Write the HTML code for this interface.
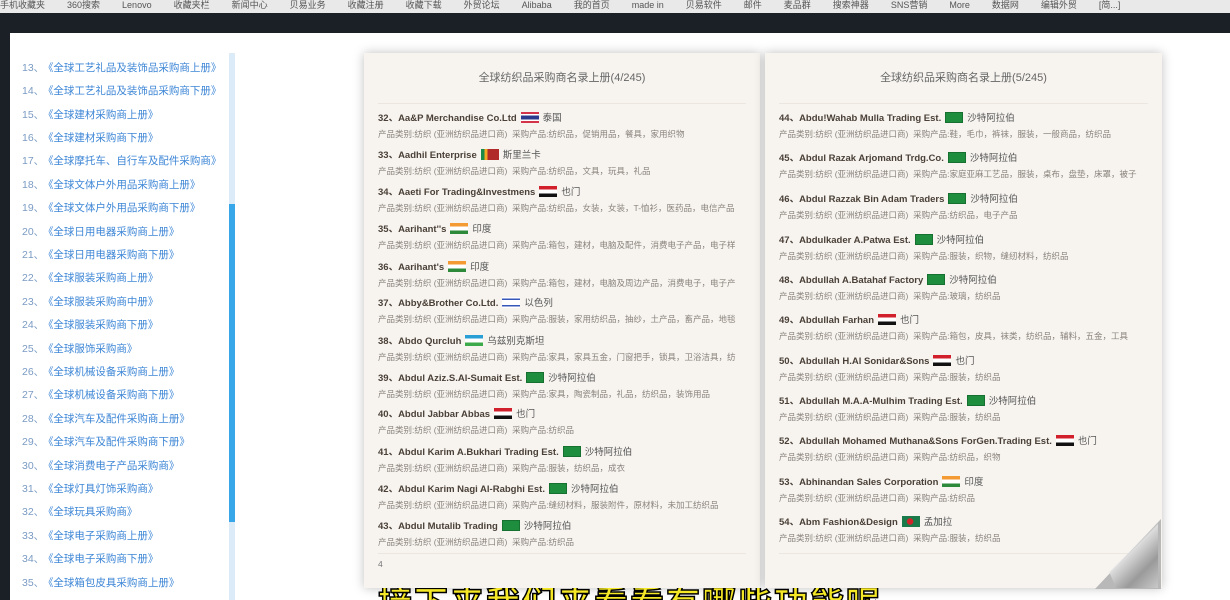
<!DOCTYPE html>
<html style="width:1230px;height:600px;overflow:hidden"><head><meta charset="utf-8"><style>
*{margin:0;padding:0;box-sizing:border-box}
body{width:1230px;height:600px;overflow:hidden;background:#fff;position:relative;font-family:"Liberation Sans","Noto Sans CJK SC",sans-serif}
.abs{position:absolute;white-space:nowrap}
#bm{left:0;top:0;width:1230px;height:13px;background:#e9e9e9;font-size:9px;color:#555;line-height:11px;overflow:hidden}
#bm span{margin-right:22px}
#dark{left:0;top:13px;width:1230px;height:22px;background:#1b1f26}
#ls{left:0;top:13px;width:10px;height:587px;background:#1b1f26}
#panel{left:10px;top:33px;width:1220px;height:567px;background:#fff}
.si{position:absolute;left:22px;font-size:10.5px;color:#3d86d6;white-space:nowrap}
.si b{font-weight:normal;color:#7a9bc4;margin-right:4px}
#track{left:229px;top:53px;width:6px;height:547px;background:#dcebf8}
#thumb{left:229px;top:204px;width:6px;height:318px;background:#38a7ea}
.page{position:absolute;top:53px;height:535px;background:#f7f4f0;overflow:hidden;box-shadow:0 0 10px rgba(0,0,0,.25)}
.ttl{position:absolute;top:16px;width:100%;text-align:center;font-size:11px;color:#666}
.sep{position:absolute;left:14px;right:14px;height:1px;background:#ebe6e0}
.n{position:absolute;left:14px;font-size:9.5px;font-weight:bold;color:#4a4037;white-space:nowrap;line-height:12px}
.n i{font-style:normal;font-weight:normal;color:#555;margin-left:4px}
.d{position:absolute;left:14px;font-size:8.5px;color:#8a837c;white-space:nowrap;line-height:11px}
.f{display:inline-block;width:18px;height:11px;vertical-align:-2px;margin-left:4px}
.th{background:linear-gradient(#d3344a 0 17%,#fff 17% 33%,#2b3a8c 33% 67%,#fff 67% 83%,#d3344a 83%)}
.lk{background:linear-gradient(90deg,#1a8a4a 0 20%,#f5a623 20% 35%,#b02a2a 35%)}
.ye{background:linear-gradient(#d1202c 0 33%,#fff 33% 66%,#111 66%)}
.in{background:linear-gradient(#f39a33 0 33%,#fff 33% 66%,#2c8a3a 66%)}
.il{background:linear-gradient(#fff 0 15%,#3657b8 15% 28%,#fff 28% 72%,#3657b8 72% 85%,#fff 85%)}
.uz{background:linear-gradient(#2a9fd6 0 33%,#fff 33% 66%,#3caa4a 66%)}
.sa{background:#1e8e3e;border:1px solid #167030}
.bd{background:radial-gradient(circle at 45% 50%,#d0242a 0 3px,#1a7a4a 3.5px)}
#curl{left:1095px;top:519px;width:0;height:0;border-left:66px solid transparent;border-bottom:70px solid #b8b8b8}
#sub{left:378px;top:584px;font-size:34px;font-weight:bold;color:#f5e826;-webkit-text-stroke:1.5px #000;letter-spacing:2px;line-height:40px}
</style></head><body>
<div id="bm" class="abs"><span>手机收藏夹</span><span>360搜索</span><span>Lenovo</span><span>收藏夹栏</span><span>新闻中心</span><span>贝易业务</span><span>收藏注册</span><span>收藏下载</span><span>外贸论坛</span><span>Alibaba</span><span>我的首页</span><span>made in</span><span>贝易软件</span><span>邮件</span><span>麦品群</span><span>搜索神器</span><span>SNS营销</span><span>More</span><span>数据网</span><span>编辑外贸</span><span>[简...]</span></div>
<div id="dark" class="abs"></div>
<div id="ls" class="abs"></div>
<div id="panel" class="abs"></div>
<div id="track" class="abs"></div>
<div id="thumb" class="abs"></div>

<div class="si" style="top:60px"><b>13、</b>《全球工艺礼品及装饰品采购商上册》</div>
<div class="si" style="top:83px"><b>14、</b>《全球工艺礼品及装饰品采购商下册》</div>
<div class="si" style="top:107px"><b>15、</b>《全球建材采购商上册》</div>
<div class="si" style="top:130px"><b>16、</b>《全球建材采购商下册》</div>
<div class="si" style="top:153px"><b>17、</b>《全球摩托车、自行车及配件采购商》</div>
<div class="si" style="top:177px"><b>18、</b>《全球文体户外用品采购商上册》</div>
<div class="si" style="top:200px"><b>19、</b>《全球文体户外用品采购商下册》</div>
<div class="si" style="top:224px"><b>20、</b>《全球日用电器采购商上册》</div>
<div class="si" style="top:247px"><b>21、</b>《全球日用电器采购商下册》</div>
<div class="si" style="top:270px"><b>22、</b>《全球服装采购商上册》</div>
<div class="si" style="top:294px"><b>23、</b>《全球服装采购商中册》</div>
<div class="si" style="top:317px"><b>24、</b>《全球服装采购商下册》</div>
<div class="si" style="top:341px"><b>25、</b>《全球服饰采购商》</div>
<div class="si" style="top:364px"><b>26、</b>《全球机械设备采购商上册》</div>
<div class="si" style="top:387px"><b>27、</b>《全球机械设备采购商下册》</div>
<div class="si" style="top:411px"><b>28、</b>《全球汽车及配件采购商上册》</div>
<div class="si" style="top:434px"><b>29、</b>《全球汽车及配件采购商下册》</div>
<div class="si" style="top:458px"><b>30、</b>《全球消费电子产品采购商》</div>
<div class="si" style="top:481px"><b>31、</b>《全球灯具灯饰采购商》</div>
<div class="si" style="top:504px"><b>32、</b>《全球玩具采购商》</div>
<div class="si" style="top:528px"><b>33、</b>《全球电子采购商上册》</div>
<div class="si" style="top:551px"><b>34、</b>《全球电子采购商下册》</div>
<div class="si" style="top:575px"><b>35、</b>《全球箱包皮具采购商上册》</div>

<div class="page" style="left:364px;width:396px">
<div class="ttl">全球纺织品采购商名录上册(4/245)</div>
<div class="sep" style="top:50px"></div>
<div class="n" style="top:59px">32、Aa&amp;P Merchandise Co.Ltd<span class="f th"></span><i>泰国</i></div>
<div class="d" style="top:76px">产品类别:纺织 (亚洲纺织品进口商)&nbsp; 采购产品:纺织品，促销用品，餐具，家用织物</div>
<div class="n" style="top:96px">33、Aadhil Enterprise<span class="f lk"></span><i>斯里兰卡</i></div>
<div class="d" style="top:113px">产品类别:纺织 (亚洲纺织品进口商)&nbsp; 采购产品:纺织品，文具，玩具，礼品</div>
<div class="n" style="top:133px">34、Aaeti For Trading&amp;Investmens<span class="f ye"></span><i>也门</i></div>
<div class="d" style="top:150px">产品类别:纺织 (亚洲纺织品进口商)&nbsp; 采购产品:纺织品，女装，女装，T-恤衫，医药品，电信产品</div>
<div class="n" style="top:170px">35、Aarihant''s<span class="f in"></span><i>印度</i></div>
<div class="d" style="top:187px">产品类别:纺织 (亚洲纺织品进口商)&nbsp; 采购产品:箱包，建材，电脑及配件，消费电子产品，电子样</div>
<div class="n" style="top:208px">36、Aarihant's<span class="f in"></span><i>印度</i></div>
<div class="d" style="top:225px">产品类别:纺织 (亚洲纺织品进口商)&nbsp; 采购产品:箱包，建材，电脑及周边产品，消费电子，电子产</div>
<div class="n" style="top:244px">37、Abby&amp;Brother Co.Ltd.<span class="f il"></span><i>以色列</i></div>
<div class="d" style="top:261px">产品类别:纺织 (亚洲纺织品进口商)&nbsp; 采购产品:服装，家用纺织品，抽纱，土产品，畜产品，地毯</div>
<div class="n" style="top:282px">38、Abdo Qurcluh<span class="f uz"></span><i>乌兹别克斯坦</i></div>
<div class="d" style="top:299px">产品类别:纺织 (亚洲纺织品进口商)&nbsp; 采购产品:家具，家具五金，门窗把手，锁具，卫浴洁具，纺</div>
<div class="n" style="top:319px">39、Abdul Aziz.S.Al-Sumait Est.<span class="f sa"></span><i>沙特阿拉伯</i></div>
<div class="d" style="top:336px">产品类别:纺织 (亚洲纺织品进口商)&nbsp; 采购产品:家具，陶瓷制品，礼品，纺织品，装饰用品</div>
<div class="n" style="top:355px">40、Abdul Jabbar Abbas<span class="f ye"></span><i>也门</i></div>
<div class="d" style="top:372px">产品类别:纺织 (亚洲纺织品进口商)&nbsp; 采购产品:纺织品</div>
<div class="n" style="top:393px">41、Abdul Karim A.Bukhari Trading Est.<span class="f sa"></span><i>沙特阿拉伯</i></div>
<div class="d" style="top:410px">产品类别:纺织 (亚洲纺织品进口商)&nbsp; 采购产品:服装，纺织品，成衣</div>
<div class="n" style="top:430px">42、Abdul Karim Nagi Al-Rabghi Est.<span class="f sa"></span><i>沙特阿拉伯</i></div>
<div class="d" style="top:447px">产品类别:纺织 (亚洲纺织品进口商)&nbsp; 采购产品:缝纫材料，服装附件，原材料，未加工纺织品</div>
<div class="n" style="top:467px">43、Abdul Mutalib Trading<span class="f sa"></span><i>沙特阿拉伯</i></div>
<div class="d" style="top:484px">产品类别:纺织 (亚洲纺织品进口商)&nbsp; 采购产品:纺织品</div>
<div class="sep" style="top:500px"></div>
<div class="d" style="top:506px;color:#777">4</div>
</div>

<div class="page" style="left:765px;width:397px">
<div class="ttl">全球纺织品采购商名录上册(5/245)</div>
<div class="sep" style="top:50px"></div>
<div class="n" style="top:59px">44、Abdu!Wahab Mulla Trading Est.<span class="f sa"></span><i>沙特阿拉伯</i></div>
<div class="d" style="top:76px">产品类别:纺织 (亚洲纺织品进口商)&nbsp; 采购产品:鞋，毛巾，裤袜，服装，一般商品，纺织品</div>
<div class="n" style="top:99px">45、Abdul Razak Arjomand Trdg.Co.<span class="f sa"></span><i>沙特阿拉伯</i></div>
<div class="d" style="top:116px">产品类别:纺织 (亚洲纺织品进口商)&nbsp; 采购产品:家庭亚麻工艺品，服装，桌布，盘垫，床罩，被子</div>
<div class="n" style="top:140px">46、Abdul Razzak Bin Adam Traders<span class="f sa"></span><i>沙特阿拉伯</i></div>
<div class="d" style="top:157px">产品类别:纺织 (亚洲纺织品进口商)&nbsp; 采购产品:纺织品，电子产品</div>
<div class="n" style="top:181px">47、Abdulkader A.Patwa Est.<span class="f sa"></span><i>沙特阿拉伯</i></div>
<div class="d" style="top:198px">产品类别:纺织 (亚洲纺织品进口商)&nbsp; 采购产品:服装，织物，缝纫材料，纺织品</div>
<div class="n" style="top:221px">48、Abdullah A.Batahaf Factory<span class="f sa"></span><i>沙特阿拉伯</i></div>
<div class="d" style="top:238px">产品类别:纺织 (亚洲纺织品进口商)&nbsp; 采购产品:玻璃，纺织品</div>
<div class="n" style="top:261px">49、Abdullah Farhan<span class="f ye"></span><i>也门</i></div>
<div class="d" style="top:278px">产品类别:纺织 (亚洲纺织品进口商)&nbsp; 采购产品:箱包，皮具，袜类，纺织品，辅料，五金，工具</div>
<div class="n" style="top:302px">50、Abdullah H.Al Sonidar&amp;Sons<span class="f ye"></span><i>也门</i></div>
<div class="d" style="top:319px">产品类别:纺织 (亚洲纺织品进口商)&nbsp; 采购产品:服装，纺织品</div>
<div class="n" style="top:342px">51、Abdullah M.A.A-Mulhim Trading Est.<span class="f sa"></span><i>沙特阿拉伯</i></div>
<div class="d" style="top:359px">产品类别:纺织 (亚洲纺织品进口商)&nbsp; 采购产品:服装，纺织品</div>
<div class="n" style="top:382px">52、Abdullah Mohamed Muthana&amp;Sons ForGen.Trading Est.<span class="f ye"></span><i>也门</i></div>
<div class="d" style="top:399px">产品类别:纺织 (亚洲纺织品进口商)&nbsp; 采购产品:纺织品，织物</div>
<div class="n" style="top:423px">53、Abhinandan Sales Corporation<span class="f in"></span><i>印度</i></div>
<div class="d" style="top:440px">产品类别:纺织 (亚洲纺织品进口商)&nbsp; 采购产品:纺织品</div>
<div class="n" style="top:463px">54、Abm Fashion&amp;Design<span class="f bd"></span><i>孟加拉</i></div>
<div class="d" style="top:480px">产品类别:纺织 (亚洲纺织品进口商)&nbsp; 采购产品:服装，纺织品</div>
<div class="sep" style="top:500px"></div>
<div class="d" style="top:506px;left:376px;color:#777">7</div>
</div>
<div id="curl" class="abs"></div>
<div class="abs" style="left:1098px;top:522px;width:60px;height:66px;background:linear-gradient(135deg,transparent 48%,#ddd 50%,#9a9a9a 75%,#c9c9c9);clip-path:polygon(100% 0,100% 100%,30% 100%,0 35%)"></div>
<div class="abs" style="left:0;top:588px;width:1230px;height:12px;overflow:hidden">
<div id="sub" class="abs" style="top:-4px">接下来我们来看看有哪些功能呢</div>
</div>
</body></html>
